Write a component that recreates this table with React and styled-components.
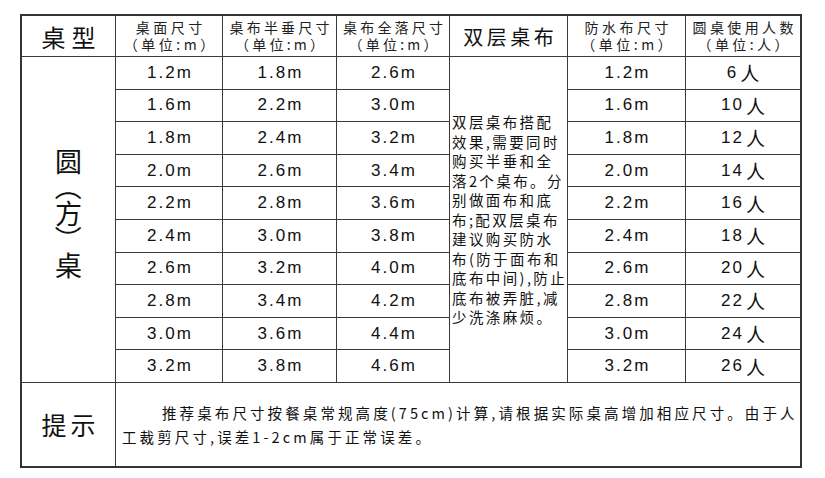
import React from "react";
import styled, { createGlobalStyle } from "styled-components";

const GlobalStyle = createGlobalStyle`
  html, body {
    margin: 0;
    padding: 0;
    background: #fff;
  }
  body {
    font-family: "Liberation Sans", "Noto Sans CJK SC", sans-serif;
    color: #111;
  }
`;

const Page = styled.div`
  width: 825px;
  height: 478px;
  padding: 14px 0 0 20px;
  box-sizing: border-box;
`;

const Table = styled.div`
  display: grid;
  width: 782px;
  box-sizing: border-box;
  border: 2px solid #333;
  background: #3a3a3a;
  gap: 1px;
  grid-template-columns: 93px 106px 113px 112px 117px 117px 114px;
  grid-template-rows: 40px repeat(10, 31.6px) 83px;
`;

const Cell = styled.div`
  background: #fff;
  display: flex;
  align-items: center;
  justify-content: center;
  overflow: hidden;
  white-space: nowrap;
`;

const TypeHead = styled(Cell)`
  font-family: "Noto Sans CJK SC", sans-serif;
  font-size: 24px;
  letter-spacing: 6px;
  padding-left: 6px;
  color: #111;
`;

const HeadCell = styled(Cell)`
  flex-direction: column;
  font-family: "Noto Sans CJK SC", sans-serif;
  font-size: 14px;
  line-height: 17px;
  color: #222;
  letter-spacing: ${(p) => p.$spacing || 3.5}px;
  padding-left: ${(p) => p.$spacing || 3.5}px;
`;

const BigHead = styled(Cell)`
  font-family: "Noto Sans CJK SC", sans-serif;
  font-size: 20px;
  letter-spacing: 3.5px;
  padding-left: 3.5px;
  color: #111;
`;

const Value = styled(Cell)`
  font-size: 17px;
  letter-spacing: 2px;
  padding-left: 2px;
  color: #111;

  span {
    font-family: "Noto Sans CJK SC", sans-serif;
    font-size: 19px;
    margin-left: 2px;
  }
`;

const TallCell = styled(Cell)`
  grid-column: ${(p) => p.$col};
  grid-row: 2 / span 10;
`;

const VerticalTitle = styled.div`
  display: flex;
  flex-direction: column;
  align-items: center;
  font-family: "Noto Sans CJK SC", sans-serif;
  font-size: 27px;
  margin-bottom: 12px;
`;

const Glyph = styled.span`
  display: block;
  width: 27px;
  height: 26px;
  line-height: 26px;
  text-align: center;
  transform: ${(p) => (p.$turn ? "rotate(90deg)" : "none")};
`;

const Note = styled.div`
  align-self: center;
  font-family: "Noto Sans CJK SC", "Liberation Sans", sans-serif;
  font-size: 14.5px;
  line-height: 19.5px;
  letter-spacing: 2.4px;
  padding-left: 2px;
  width: 100%;
  box-sizing: border-box;
  color: #111;
`;

const TipHead = styled(Cell)`
  font-family: "Noto Sans CJK SC", sans-serif;
  font-size: 25px;
  letter-spacing: 4px;
  padding-left: 4px;
`;

const TipText = styled(Cell)`
  grid-column: 2 / span 6;
  justify-content: flex-start;
  align-items: flex-start;
  padding: 18px 0 0 6px;
  font-family: "Noto Sans CJK SC", sans-serif;
  font-size: 14.5px;
  line-height: 24px;
  letter-spacing: 3.1px;
  color: #111;

  p {
    margin: 0;
  }
`;

const Indent = styled.span`
  display: inline-block;
  width: 40px;
`;

const rows = [
  ["1.2", "1.8", "2.6", "1.2", "6"],
  ["1.6", "2.2", "3.0", "1.6", "10"],
  ["1.8", "2.4", "3.2", "1.8", "12"],
  ["2.0", "2.6", "3.4", "2.0", "14"],
  ["2.2", "2.8", "3.6", "2.2", "16"],
  ["2.4", "3.0", "3.8", "2.4", "18"],
  ["2.6", "3.2", "4.0", "2.6", "20"],
  ["2.8", "3.4", "4.2", "2.8", "22"],
  ["3.0", "3.6", "4.4", "3.0", "24"],
  ["3.2", "3.8", "4.6", "3.2", "26"],
];

const noteLines = [
  "双层桌布搭配",
  "效果,需要同时",
  "购买半垂和全",
  "落2个桌布。分",
  "别做面布和底",
  "布;配双层桌布",
  "建议购买防水",
  "布(防于面布和",
  "底布中间),防止",
  "底布被弄脏,减",
  "少洗涤麻烦。",
];

const title = ["圆", "（", "方", "）", "桌"];

function Meter({ v }) {
  return <Value>{v}m</Value>;
}

export default function App() {
  return (
    <Page>
      <GlobalStyle />
      <Table>
        <TypeHead>桌型</TypeHead>
        <HeadCell>
          <div>桌面尺寸</div>
          <div>（单位:m）</div>
        </HeadCell>
        <HeadCell $spacing={3.2}>
          <div>桌布半垂尺寸</div>
          <div>（单位:m）</div>
        </HeadCell>
        <HeadCell $spacing={3.2}>
          <div>桌布全落尺寸</div>
          <div>（单位:m）</div>
        </HeadCell>
        <BigHead>双层桌布</BigHead>
        <HeadCell>
          <div>防水布尺寸</div>
          <div>（单位:m）</div>
        </HeadCell>
        <HeadCell $spacing={3.4}>
          <div>圆桌使用人数</div>
          <div>（单位:人）</div>
        </HeadCell>

        <TallCell $col="1">
          <VerticalTitle>
            {title.map((c, i) => (
              <Glyph key={i} $turn={i % 2 === 1}>
                {c}
              </Glyph>
            ))}
          </VerticalTitle>
        </TallCell>
        <TallCell $col="5">
          <Note>
            {noteLines.map((l, i) => (
              <div key={i}>{l}</div>
            ))}
          </Note>
        </TallCell>

        {rows.map((r, i) => (
          <React.Fragment key={i}>
            <Meter v={r[0]} />
            <Meter v={r[1]} />
            <Meter v={r[2]} />
            <Meter v={r[3]} />
            <Value>
              {r[4]}
              <span>人</span>
            </Value>
          </React.Fragment>
        ))}

        <TipHead>提示</TipHead>
        <TipText>
          <div>
            <p>
              <Indent />
              推荐桌布尺寸按餐桌常规高度(75cm)计算,请根据实际桌高增加相应尺寸。由于人
            </p>
            <p>工裁剪尺寸,误差1-2cm属于正常误差。</p>
          </div>
        </TipText>
      </Table>
    </Page>
  );
}
